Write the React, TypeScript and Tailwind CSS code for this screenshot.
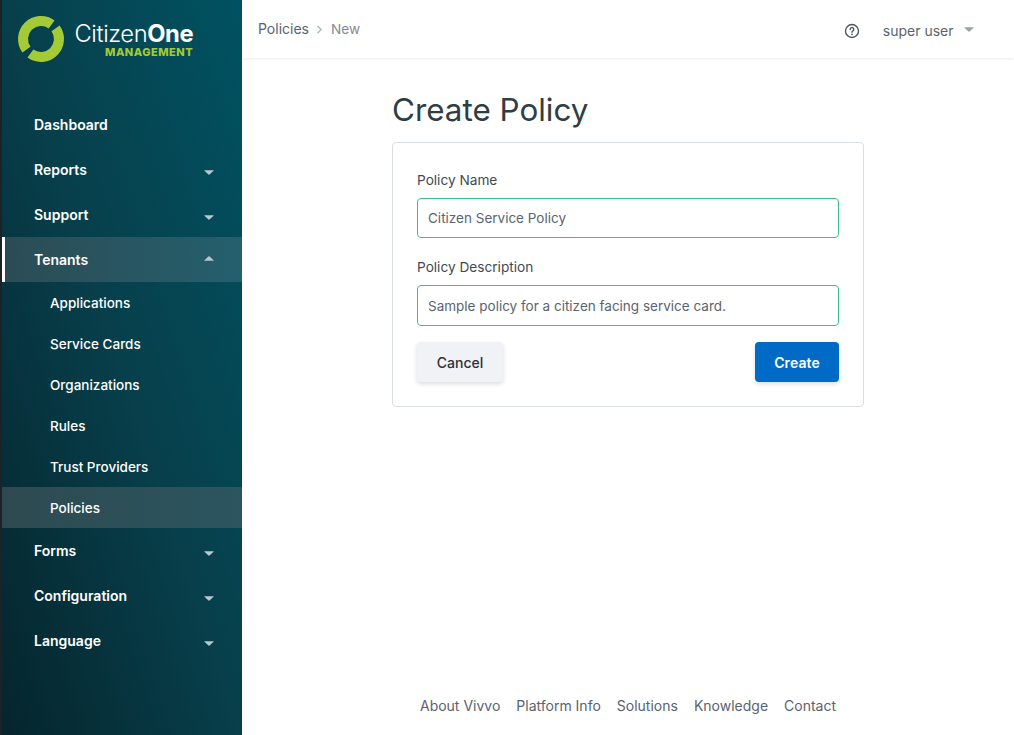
import { ChevronRight } from "lucide-react";

function Caret({ up }: { up?: boolean }) {
  return (
    <svg width="10" height="5" viewBox="0 0 10 5" className={up ? "rotate-180" : ""}>
      <path d="M0.5 0.3 H9.5 Q9.9 0.3 9.6 0.7 L5.5 4.6 Q5 5 4.5 4.6 L0.4 0.7 Q0.1 0.3 0.5 0.3Z" fill="currentColor" />
    </svg>
  );
}

function NavItem({ label, caret, open }: { label: string; caret?: boolean; open?: boolean }) {
  return (
    <div
      className={
        "flex h-[45px] items-center justify-between pr-[28px] text-[14px] font-semibold text-white " +
        (open
          ? "border-l-[3px] border-white bg-gradient-to-r from-[#2b4c55] to-[#245f6d] pl-[29px]"
          : "pl-[32px]")
      }
    >
      <span>{label}</span>
      {caret && (
        <span className={"text-[#b9c8cc] " + (open ? "-mt-[3px]" : "mt-[6px]")}>
          <Caret up={open} />
        </span>
      )}
    </div>
  );
}

function SubItem({ label, active }: { label: string; active?: boolean }) {
  return (
    <div
      className={
        "flex h-[41px] items-center pl-[48px] pt-[1px] text-[13.5px] font-medium text-white " +
        (active ? "bg-gradient-to-r from-[#2e4a50] to-[#2b5560]" : "")
      }
    >
      {label}
    </div>
  );
}

function Logo() {
  return (
    <div className="flex h-[102px] items-start pl-[15px] pt-[15px]">
      <svg width="48" height="48" viewBox="0 0 48 48" className="shrink-0">
        <g fill="none" stroke="#a4cb35" strokeWidth="10">
          <path d="M9.44 34.58 A18 18 0 0 1 34.58 9.44" />
          <path d="M38.56 13.42 A18 18 0 0 1 13.42 38.56" />
        </g>
      </svg>
      <div className="ml-[9.5px] mt-[7px] flex flex-col items-end">
        <div className="text-[23.7px] leading-[24px] tracking-[-0.4px] text-white">
          <span className="font-light">Citizen</span>
          <span className="font-bold">One</span>
        </div>
        <div className="text-[11px] font-extrabold leading-[12px] tracking-[0.5px] text-[#a4cb35]">
          MANAGEMENT
        </div>
      </div>
    </div>
  );
}

export default function App() {
  return (
    <div className="flex h-[735px] w-[1014px] overflow-hidden bg-white font-['Inter',sans-serif] text-[#3f4a55]">
      <aside className="flex w-[242px] shrink-0 flex-col border-l-[2px] border-[#1c2226] bg-gradient-to-tr from-[#05252d] via-[#073f4b] to-[#005262]">
        <Logo />
        <NavItem label="Dashboard" />
        <NavItem label="Reports" caret />
        <NavItem label="Support" caret />
        <NavItem label="Tenants" caret open />
        <SubItem label="Applications" />
        <SubItem label="Service Cards" />
        <SubItem label="Organizations" />
        <SubItem label="Rules" />
        <SubItem label="Trust Providers" />
        <SubItem label="Policies" active />
        <NavItem label="Forms" caret />
        <NavItem label="Configuration" caret />
        <NavItem label="Language" caret />
      </aside>

      <div className="flex min-w-0 flex-1 flex-col">
        <header className="flex h-[58px] items-start justify-between shadow-[0_1px_3px_rgba(0,0,0,0.08)]">
          <div className="mt-[20px] flex items-center pl-[16px] text-[14px] leading-[18px]">
            <span className="text-[#59636e]">Policies</span>
            <ChevronRight size={13} strokeWidth={3} className="mx-[4.5px] text-[#b5bbc2]" />
            <span className="text-[13.6px] text-[#7f8a96]">New</span>
          </div>
          <div className="mt-[22px] flex items-center pr-[40px] text-[14px] leading-[18px] text-[#59636e]">
            <svg width="16" height="16" viewBox="0 0 16 16" fill="none" className="mr-[23px]">
              <circle cx="8" cy="8" r="6.5" stroke="#4d5763" strokeWidth="1.4" />
              <path d="M6.2 6.4 A1.8 1.8 0 1 1 8.9 7.9 C8.2 8.3 8 8.6 8 9.3" stroke="#4d5763" strokeWidth="1.4" strokeLinecap="round" />
              <circle cx="8" cy="11.3" r="0.9" fill="#4d5763" />
            </svg>
            <span>super user</span>
            <span className="-mt-[4px] ml-[10.5px] text-[#9aa1a9]">
              <Caret />
            </span>
          </div>
        </header>

        <main className="flex flex-1 flex-col items-center">
          <div className="mt-[30px] w-[472px]">
            <h1 className="translate-y-[1px] text-[31.4px] font-normal leading-[42px] text-[#2f3d45]">Create Policy</h1>
            <div className="mt-[12px] h-[265px] rounded-[4px] border border-[#d9dee3] px-[24px] pt-[27px]">
              <label className="block text-[13.65px] leading-[20px] text-[#3f4a55]">Policy Name</label>
              <div className="mt-[8px] flex h-[40px] items-center rounded-[4px] border border-[#3cc08a] px-[10px] text-[13.5px] text-[#5a6470]">
                Citizen Service Policy
              </div>
              <label className="mt-[19px] block text-[13.65px] leading-[20px] text-[#3f4a55]">Policy Description</label>
              <div className="mt-[8px] flex h-[41px] items-center rounded-[4px] border border-[#3cc08a] px-[10px] pt-[1px] text-[13.5px] text-[#5a6470]">
                Sample policy for a citizen facing service card.
              </div>
              <div className="mt-[16px] flex justify-between">
                <button className="h-[40px] w-[86px] rounded-[4px] bg-[#f1f2f6] text-[14px] font-medium text-[#2b3138] shadow-[0_2px_5px_rgba(0,0,0,0.14)]">
                  Cancel
                </button>
                <button className="h-[40px] w-[84px] rounded-[4px] bg-[#006bc6] text-[14px] font-semibold tracking-[0.1px] text-white shadow-[0_2px_5px_rgba(0,0,0,0.14)]">
                  Create
                </button>
              </div>
            </div>
          </div>

          <footer className="mb-[20px] mt-auto flex gap-4 text-[14px] leading-[18px] text-[#59636e]">
            <span>About Vivvo</span>
            <span>Platform Info</span>
            <span>Solutions</span>
            <span>Knowledge</span>
            <span>Contact</span>
          </footer>
        </main>
      </div>
    </div>
  );
}
